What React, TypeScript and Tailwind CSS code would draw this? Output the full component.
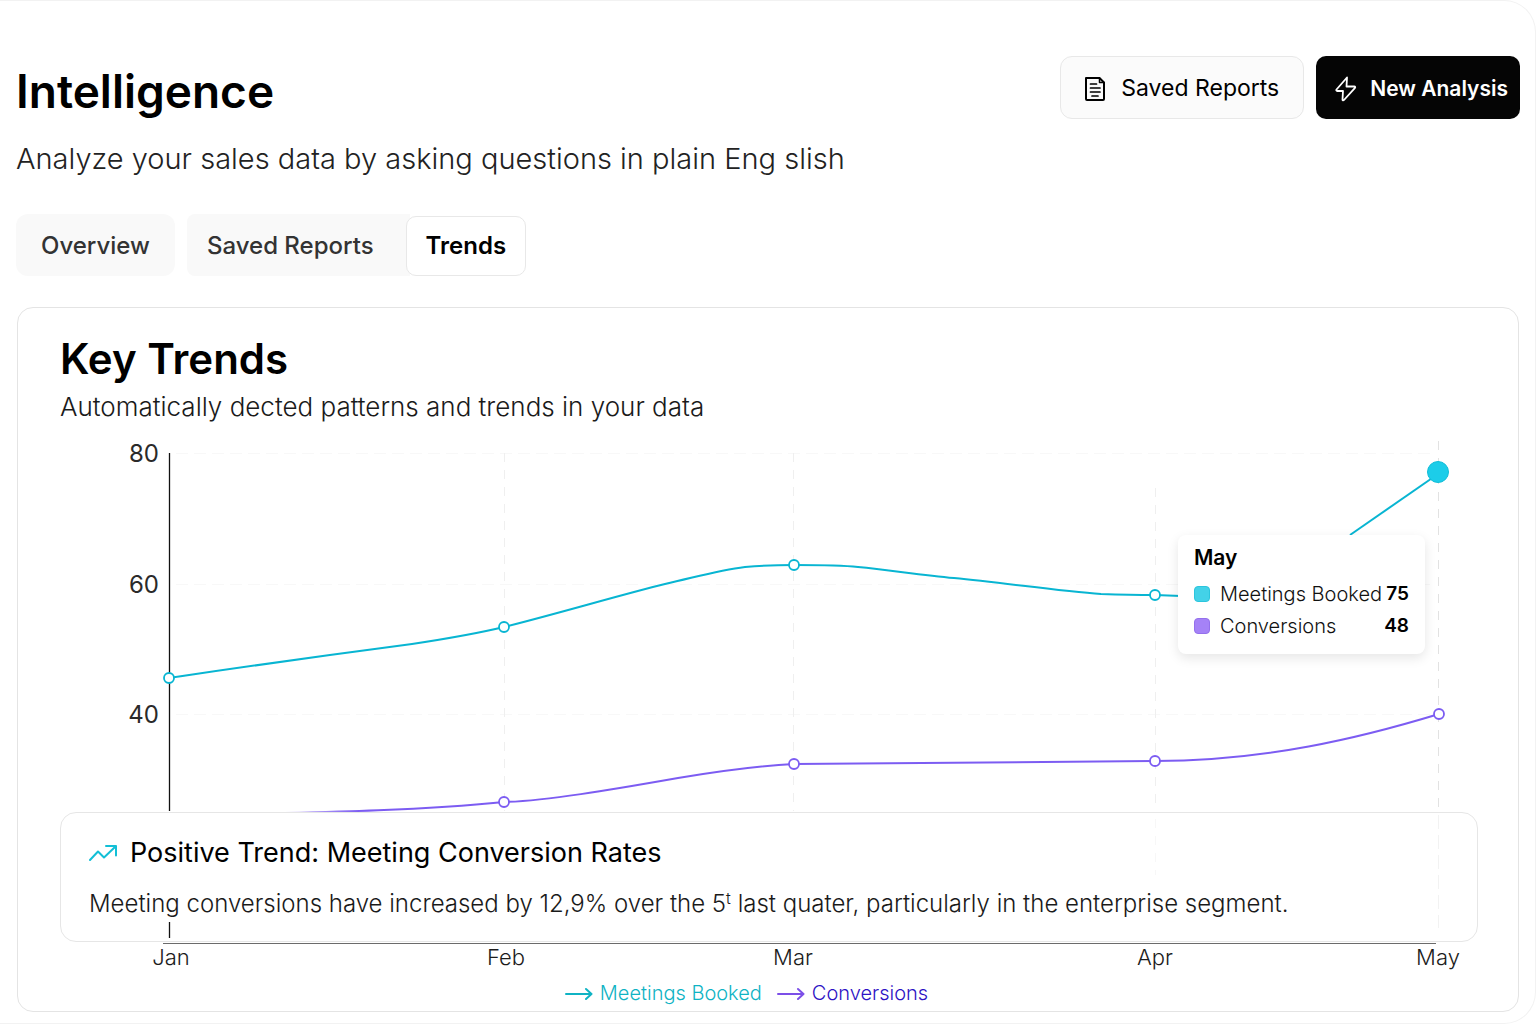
const months = [
  { label: "Jan", x: 171 },
  { label: "Feb", x: 506 },
  { label: "Mar", x: 793 },
  { label: "Apr", x: 1155 },
  { label: "May", x: 1438 },
];

const levels = [
  { label: "80", y: 453 },
  { label: "60", y: 584 },
  { label: "40", y: 714 },
];

const gridLines = [
  { x: 504, from: 453, to: 811 },
  { x: 793, from: 453, to: 811 },
  { x: 1155, from: 488, to: 811 },
];

const meetingPoints = [
  { x: 169, y: 678 },
  { x: 504, y: 627 },
  { x: 794, y: 565 },
  { x: 1155, y: 595 },
];

const conversionPoints = [
  { x: 504, y: 802 },
  { x: 794, y: 764 },
  { x: 1155, y: 761 },
  { x: 1439, y: 714 },
];

function ReportIcon() {
  return (
    <svg width="24" height="26" viewBox="0 0 24 26" fill="none" stroke="currentColor" strokeLinejoin="round" strokeLinecap="round" aria-hidden="true">
      <path d="M3 2h13.500l4.500 4.500V23a1 1 0 0 1-1 1H4a1 1 0 0 1-1-1z" strokeWidth="2" />
      <path d="M16.500 2v4.500H21" strokeWidth="1.500" />
      <path d="M7.500 8h6M7.500 12h9.500M7.500 16h9.500M9 20h6" strokeWidth="1.700" />
    </svg>
  );
}

function BoltIcon() {
  return (
    <svg width="24" height="28" viewBox="0 0 24 28" fill="none" stroke="currentColor" strokeWidth="1.800" strokeLinejoin="round" strokeLinecap="round" aria-hidden="true">
      <path d="M13 2.500 2.500 14.500c-.5.700-.2 1.500.7 1.500H9l-.5 8.500c0 1 .8 1.300 1.500.5L21 12.800c.5-.7.200-1.300-.7-1.300H12.500L13 2.500z" />
    </svg>
  );
}

function TrendIcon() {
  return (
    <svg width="29" height="18" viewBox="1 0 29 18" fill="none" stroke="#12bfd6" strokeWidth="2" strokeLinejoin="round" strokeLinecap="round" aria-hidden="true">
      <path d="M2 16 10 7.500l6 6L27.500 2.500" />
      <path d="M18 2h10v9.500" />
    </svg>
  );
}

function LegendArrow() {
  return (
    <svg width="30" height="14" viewBox="0 0 30 14" fill="none" stroke="currentColor" strokeWidth="2" strokeLinejoin="round" strokeLinecap="round" aria-hidden="true">
      <path d="M2 8h25M22 3l5.500 5-5.500 5" />
    </svg>
  );
}

function TrendChart() {
  return (
    <svg className="block w-full" viewBox="18 423 1500 552" role="img" aria-label="Meetings booked and conversions by month">
      <defs>
        <clipPath id="plot-area">
          <rect x="160" y="440" width="1300" height="372" />
        </clipPath>
        <linearGradient id="conversion-fade" gradientUnits="userSpaceOnUse" x1="240" y1="0" x2="360" y2="0">
          <stop offset="0" stopColor="#7c5cf2" stopOpacity="0" />
          <stop offset="1" stopColor="#7c5cf2" />
        </linearGradient>
      </defs>

      <g stroke="#f8f8f8">
        {levels.map((l) => (
          <path key={l.label} d={`M176 ${l.y + 0.5}H1432`} strokeDasharray="12 6" />
        ))}
      </g>
      <g stroke="#efefef" strokeDasharray="9 8">
        {gridLines.map((g) => (
          <path key={g.x} d={`M${g.x + 0.5} ${g.from}V${g.to}`} />
        ))}
      </g>
      <path d="M1438.500 441V811" stroke="#e2e2e2" strokeDasharray="9 8" />
      <path d="M1438.500 815V928" stroke="#f2f2f2" strokeDasharray="14 6" />
      <path d="M1155.500 819V875" stroke="#f7f7f7" strokeDasharray="9 8" />

      <path d="M169.500 453V811M169.500 922V938" stroke="#111111" strokeWidth="1.300" />
      <path d="M163 943.500H1436" stroke="#6b6b6b" />

      <g fill="none" strokeWidth="2" clipPath="url(#plot-area)">
        <path
          stroke="#08b5d2"
          d="M169 678C230 669 290 660 412 644C445 639 475 634 504 627C560 613 620 595 665 584C700 576 720 570 745 567Q770 565 794 565C820 565 840 565 858 567C890 570 920 575 954 578C1005 583 1060 591 1101 594Q1130 595 1155 595L1181 596"
        />
        <path stroke="#08b5d2" d="M1350 535 1438 474" />
        <path
          stroke="url(#conversion-fade)"
          d="M240 814C335 812 425 810 504 802C545 801 610 790 678 778C720 771 755 766 794 764C915 762 1035 762 1155 761C1265 761 1360 738 1439 714"
        />
      </g>

      <g fill="#ffffff" strokeWidth="1.800">
        {meetingPoints.map((p) => (
          <circle key={p.x} cx={p.x} cy={p.y} r="5" stroke="#08b5d2" />
        ))}
        {conversionPoints.map((p) => (
          <circle key={p.x} cx={p.x} cy={p.y} r="5" stroke="#7c5cf2" />
        ))}
      </g>
      <circle cx="1438" cy="472" r="10.500" fill="#1ccde9" stroke="#12bdd8" />

      <g fill="#2a2a2a" fontSize="24" textAnchor="end">
        {levels.map((l) => (
          <text key={l.label} x="159" y={l.y + 9}>
            {l.label}
          </text>
        ))}
      </g>
      <g fill="#1c1c1c" fontSize="22" fontWeight="300" textAnchor="middle">
        {months.map((m) => (
          <text key={m.label} x={m.x} y="965">
            {m.label}
          </text>
        ))}
      </g>
    </svg>
  );
}

function Tooltip() {
  return (
    <div className="absolute top-[20.200%] right-[6.200%] w-[247px] rounded-lg bg-white px-4 pt-[9px] pb-3 shadow-[0_4px_12px_rgba(0,0,0,0.1)]">
      <p className="text-[21px] leading-7 font-semibold text-black">May</p>
      <ul className="mt-1.5 text-xl leading-8 text-[#111111]">
        <li className="flex items-center">
          <span className="mr-2.5 size-4 shrink-0 rounded-[4px] border border-[#2cc5dd] bg-[#43d2e8]" />
          <span className="font-light whitespace-nowrap">Meetings Booked</span>
          <span className="ml-auto text-[19px] font-semibold text-black">75</span>
        </li>
        <li className="flex items-center">
          <span className="mr-2.5 size-4 shrink-0 rounded-[4px] border border-[#9470ec] bg-[#a582f7]" />
          <span className="font-light">Conversions</span>
          <span className="ml-auto text-[19px] font-semibold text-black">48</span>
        </li>
      </ul>
    </div>
  );
}

function Insight() {
  return (
    <article className="absolute right-10 bottom-[33px] left-[42px] rounded-2xl border border-[#e6e6e6] px-7 pt-5 pb-[19px]">
      <h3 className="flex items-center gap-3 text-[27px] leading-10 text-black">
        <TrendIcon />
        Positive Trend: Meeting Conversion Rates
      </h3>
      <p className="mt-[13px] text-2xl leading-9 font-light text-[#1a1a1a]">
        Meeting conversions have increased by 12,9% over the 5<sup className="text-base">t</sup> last quater, particularly in the enterprise segment.
      </p>
    </article>
  );
}

export default function App() {
  return (
    <main className="min-h-screen rounded-r-[32px] border-t border-r border-b border-[#f2f2f2] bg-white pt-[55px] pr-[15px] pb-[11px] pl-4 font-['Inter',sans-serif]">
      <header>
        <div className="flex items-end justify-between">
          <h1 className="text-[46px] leading-[56px] font-semibold text-black">Intelligence</h1>
          <div className="flex gap-3">
            <button type="button" className="flex h-[63px] items-center gap-3.5 rounded-xl border border-[#e8e8e8] bg-[#fbfbfb] pt-0.5 pr-6 pl-[22px] text-[23px] text-black">
              <ReportIcon />
              Saved Reports
            </button>
            <button type="button" className="flex h-[63px] items-center gap-3 rounded-[10px] bg-[#050505] pt-0.5 pr-3 pl-[18px] text-[21px] font-semibold text-white">
              <BoltIcon />
              New Analysis
            </button>
          </div>
        </div>
        <p className="mt-5 text-[29px] leading-10 font-light text-[#222222]">Analyze your sales data by asking questions in plain Eng slish</p>
      </header>

      <nav className="mt-[35px] flex h-[62px] items-stretch text-2xl font-medium text-[#333333]">
        <button type="button" className="mr-3 rounded-xl bg-[#f9f9f9] px-[25px] pt-0.5">
          Overview
        </button>
        <button type="button" className="rounded-l-lg bg-[#f9f9f9] pt-0.5 pr-9 pl-5">
          Saved Reports
        </button>
        <button type="button" aria-current="page" className="mt-0.5 -ml-1 rounded-[10px] border border-[#e8e8e8] bg-white px-[19px] font-semibold text-black">
          Trends
        </button>
      </nav>

      <section className="mx-px mt-[31px] rounded-2xl border border-[#e4e4e4] bg-white">
        <div className="px-[42px] pt-[25px]">
          <h2 className="text-[42px] leading-[52px] font-semibold text-black">Key Trends</h2>
          <p className="mt-1.5 text-[26px] leading-8 font-light text-[#1a1a1a]">Automatically dected patterns and trends in your data</p>
        </div>
        <div className="relative">
          <TrendChart />
          <Tooltip />
          <Insight />
        </div>
        <ul className="mt-1.5 flex justify-center gap-3.5 pr-11 pb-1.5 text-xl leading-6 font-light">
          <li className="flex items-center gap-1.5 text-[#0fb3c4]">
            <LegendArrow />
            Meetings Booked
          </li>
          <li className="flex items-center gap-1.5 text-[#7c4fe8]">
            <LegendArrow />
            <span className="text-[#2d12c4]">Conversions</span>
          </li>
        </ul>
      </section>
    </main>
  );
}
